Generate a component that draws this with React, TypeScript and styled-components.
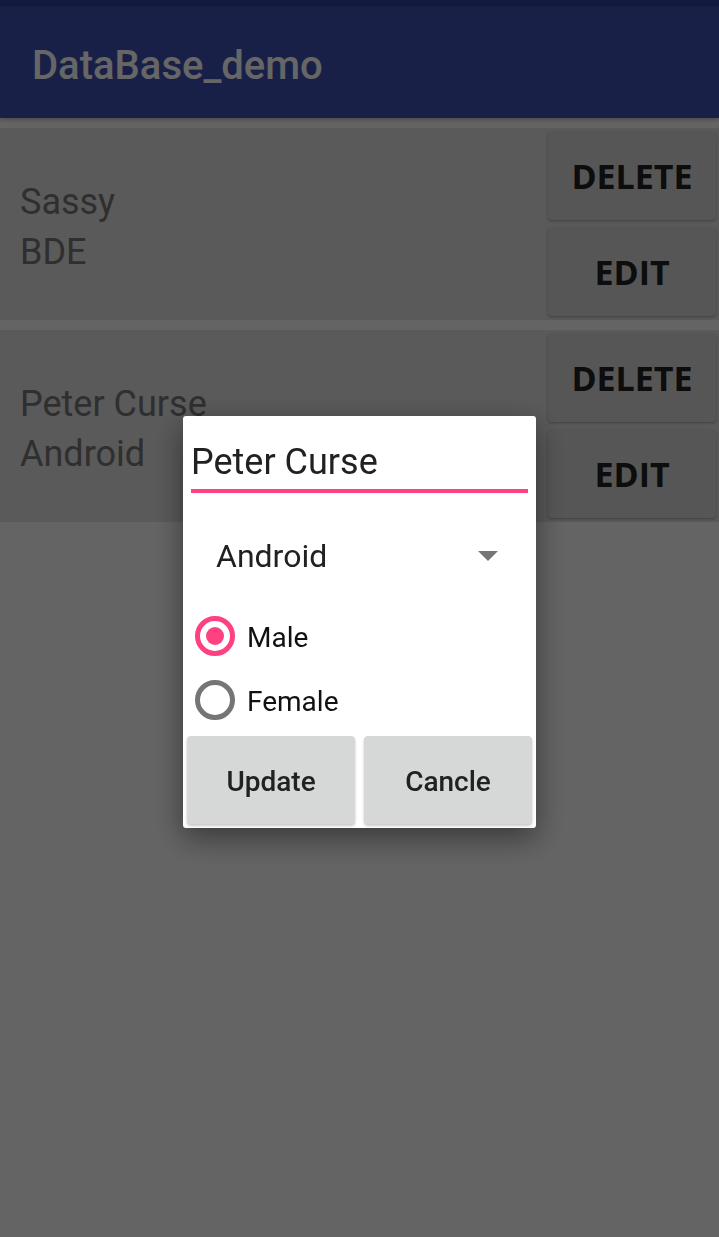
import styled, { createGlobalStyle } from 'styled-components';

const GlobalStyle = createGlobalStyle`
  html, body {
    margin: 0;
    padding: 0;
    background: #fafafa;
  }
  body {
    font-family: Roboto, "Liberation Sans", sans-serif;
  }
  * {
    box-sizing: border-box;
  }
`;

interface Student {
  name: string;
  course: string;
}

const students: Student[] = [
  { name: 'Sassy', course: 'BDE' },
  { name: 'Peter Curse', course: 'Android' },
];

export default function App() {
  return (
    <>
      <GlobalStyle />
      <StyledScreen>
        <StyledStatusBar />
        <StyledAppBar>
          <StyledTitle>DataBase_demo</StyledTitle>
        </StyledAppBar>
        <StyledList>
          {students.map((s, idx) => (
            <StyledRow key={`student-${idx}`}>
              <StyledRowText>
                <div>{s.name}</div>
                <div>{s.course}</div>
              </StyledRowText>
              <StyledRowActions>
                <StyledRowButton>Delete</StyledRowButton>
                <StyledRowButton>Edit</StyledRowButton>
              </StyledRowActions>
            </StyledRow>
          ))}
        </StyledList>
      </StyledScreen>

      {/* 수정 다이얼로그 */}
      <StyledScrim>
        <StyledDialog>
          <StyledNameField>Peter Curse</StyledNameField>
          <StyledSpinner>
            <span>Android</span>
            <StyledArrow viewBox="0 0 20 10">
              <path d="M0 0 L20 0 L10 10 Z" fill="#757575" />
            </StyledArrow>
          </StyledSpinner>
          <StyledRadio>
            <StyledRadioCircle $checked />
            <StyledRadioLabel>Male</StyledRadioLabel>
          </StyledRadio>
          <StyledRadio>
            <StyledRadioCircle $checked={false} />
            <StyledRadioLabel>Female</StyledRadioLabel>
          </StyledRadio>
          <StyledDialogButtons>
            <StyledDialogButton>Update</StyledDialogButton>
            <StyledDialogButton>Cancle</StyledDialogButton>
          </StyledDialogButtons>
        </StyledDialog>
      </StyledScrim>
    </>
  );
}

const StyledScreen = styled.div`
  width: 719px;
  min-height: 1237px;
  background: #fafafa;
`;

const StyledStatusBar = styled.div`
  height: 6px;
  background: #303f9f;
`;

const StyledAppBar = styled.div`
  height: 112px;
  background: #3f51b5;
  padding: 8px 0 0 32px;
  display: flex;
  align-items: center;
  box-shadow: 0 2px 4px rgba(0, 0, 0, 0.25);
  position: relative;
`;

const StyledTitle = styled.div`
  font-size: 40px;
  font-weight: 500;
  color: #ffffff;
  line-height: 48px;
`;

const StyledList = styled.div`
  display: flex;
  flex-direction: column;
`;

const StyledRow = styled.div`
  display: flex;
  margin-top: 10px;
  background: #e0e0e0;
`;

const StyledRowText = styled.div`
  flex: 1;
  display: flex;
  flex-direction: column;
  justify-content: center;
  padding: 5px 0 0 20px;
  font-size: 36px;
  line-height: 50px;
  color: #757575;
`;

const StyledRowActions = styled.div`
  width: 175px;
  display: flex;
  flex-direction: column;
`;

const StyledRowButton = styled.div`
  height: 88px;
  margin: 4px 3px 4px 4px;
  border-radius: 4px;
  background: #d6d7d7;
  box-shadow: 0 1px 3px rgba(0, 0, 0, 0.3);
  display: flex;
  align-items: center;
  justify-content: center;
  font-family: "Open Sans", "Noto Sans", sans-serif;
  font-weight: 700;
  font-size: 34px;
  text-transform: uppercase;
  color: #212121;
`;

const StyledScrim = styled.div`
  position: fixed;
  inset: 0;
  background: rgba(0, 0, 0, 0.6);
  display: flex;
  align-items: center;
  justify-content: center;
  padding-top: 7px;
`;

const StyledDialog = styled.div`
  width: 353px;
  background: #ffffff;
  border-radius: 3px;
  box-shadow: 0 10px 30px rgba(0, 0, 0, 0.45);
  display: flex;
  flex-direction: column;
`;

const StyledNameField = styled.div`
  margin: 0 8px;
  padding: 26px 0 7px 0;
  font-size: 36px;
  line-height: 40px;
  color: #212121;
  border-bottom: 4px solid #ff4081;
`;

const StyledSpinner = styled.div`
  height: 111px;
  padding: 43px 38px 28px 33px;
  display: flex;
  align-items: center;
  justify-content: space-between;
  font-size: 32px;
  line-height: 40px;
  color: #212121;
`;

const StyledArrow = styled.svg`
  width: 20px;
  height: 10px;
`;

const StyledRadio = styled.div`
  height: 64px;
  padding-left: 12px;
  display: flex;
  align-items: center;
  gap: 12px;
`;

const StyledRadioCircle = styled.div<{ $checked: boolean }>`
  width: 40px;
  height: 40px;
  border-radius: 50%;
  border: 5px solid ${({ $checked }) => ($checked ? '#ff4081' : '#757575')};
  display: flex;
  align-items: center;
  justify-content: center;
  &::after {
    content: '';
    width: 18px;
    height: 18px;
    border-radius: 50%;
    background: #ff4081;
    display: ${({ $checked }) => ($checked ? 'block' : 'none')};
  }
`;

const StyledRadioLabel = styled.span`
  font-size: 28px;
  line-height: 34px;
  margin-top: 3px;
  color: #111111;
`;

const StyledDialogButtons = styled.div`
  display: flex;
  gap: 9px;
  padding: 4px 4px;
`;

const StyledDialogButton = styled.div`
  flex: 1;
  height: 88px;
  border-radius: 4px;
  background: #d6d7d7;
  box-shadow: 0 2px 3px rgba(0, 0, 0, 0.22);
  display: flex;
  align-items: center;
  justify-content: center;
  padding-top: 2px;
  font-size: 28px;
  font-weight: 500;
  color: #212121;
`;
